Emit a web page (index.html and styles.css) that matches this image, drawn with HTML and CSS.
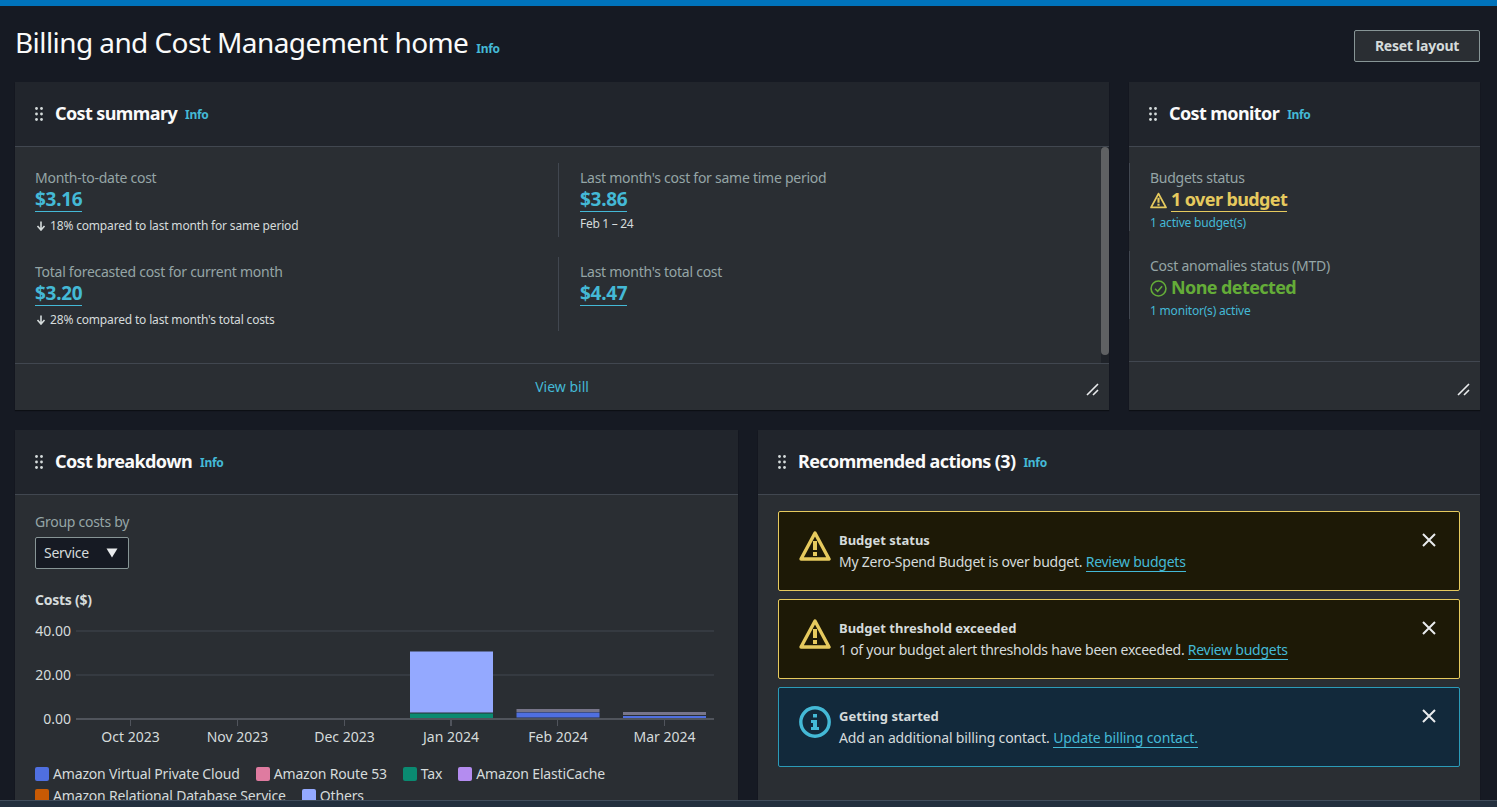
FILE: index.html
```html
<!DOCTYPE html>
<html>

<head>
    <title>Billing and Cost Management home</title>
    <meta charset="UTF-8">
    <link rel="stylesheet" href="styles.css">
</head>

<body>
    <svg width="0" height="0" class="defs">
        <symbol id="grip" viewBox="0 0 8 14">
            <circle cx="1.5" cy="1.5" r="1.4"/><circle cx="6.5" cy="1.5" r="1.4"/>
            <circle cx="1.5" cy="7" r="1.4"/><circle cx="6.5" cy="7" r="1.4"/>
            <circle cx="1.5" cy="12.5" r="1.4"/><circle cx="6.5" cy="12.5" r="1.4"/>
        </symbol>
        <symbol id="resize" viewBox="0 0 14 14">
            <path d="M1 12 L12 1 M7 12 L12 7" fill="none" stroke="currentColor" stroke-width="1.6"/>
        </symbol>
        <symbol id="close" viewBox="0 0 16 16">
            <path d="M2 2 L14 14 M14 2 L2 14" fill="none" stroke="currentColor" stroke-width="2"/>
        </symbol>
        <symbol id="warn" viewBox="0 0 32 32">
            <path d="M16 3 L30 29 H2 Z" fill="none" stroke="currentColor" stroke-width="3.4" stroke-linejoin="round"/>
            <path d="M14 11 H18 V20 H14 Z M14 22 H18 V26 H14 Z" fill="currentColor"/>
        </symbol>
        <symbol id="info" viewBox="0 0 32 32">
            <circle cx="16" cy="16" r="14.2" fill="none" stroke="currentColor" stroke-width="3.4"/>
            <path d="M14 8 H18 V11.5 H14 Z M12 14 H18 V21 H20 V24 H12 V21 H14 V17 H12 Z" fill="currentColor"/>
        </symbol>
        <symbol id="down" viewBox="0 0 10 10">
            <path d="M5 0.500 V8 M1.500 5 L5 9 L8.500 5" fill="none" stroke="currentColor" stroke-width="1.600"/>
        </symbol>
    </svg>

    <div class="topbar"></div>

    <main class="page">
        <header class="page-head">
            <div class="page-title">
                <h1>Billing and Cost Management home</h1>
                <a class="info">Info</a>
            </div>
            <button class="btn">Reset layout</button>
        </header>

        <div class="row row-top">
            <section class="card">
                <div class="card-head">
                    <svg class="grip"><use href="#grip"/></svg>
                    <h2>Cost summary</h2>
                    <a class="info">Info</a>
                </div>
                <div class="summary-scroll">
                    <div class="summary-grid">
                        <div class="metric">
                            <div class="label">Month-to-date cost</div>
                            <a class="value">$3.16</a>
                            <div class="note"><svg class="arrow"><use href="#down"/></svg>18% compared to last month for same period</div>
                        </div>
                        <div class="metric divided">
                            <div class="label">Last month's cost for same time period</div>
                            <a class="value">$3.86</a>
                            <div class="note note-range">Feb 1 – 24</div>
                        </div>
                        <div class="metric">
                            <div class="label">Total forecasted cost for current month</div>
                            <a class="value">$3.20</a>
                            <div class="note"><svg class="arrow"><use href="#down"/></svg>28% compared to last month's total costs</div>
                        </div>
                        <div class="metric divided">
                            <div class="label">Last month's total cost</div>
                            <a class="value">$4.47</a>
                        </div>
                    </div>
                    <div class="scrollbar"><div class="thumb"></div></div>
                </div>
                <div class="card-foot">
                    <a class="view-bill">View bill</a>
                    <svg class="resize"><use href="#resize"/></svg>
                </div>
            </section>

            <section class="card">
                <div class="card-head">
                    <svg class="grip"><use href="#grip"/></svg>
                    <h2>Cost monitor</h2>
                    <a class="info">Info</a>
                </div>
                <div class="monitor-body">
                    <div class="metric divided status">
                        <div class="label">Budgets status</div>
                        <div class="status-line warn-text">
                            <svg class="status-icon"><use href="#warn"/></svg>
                            <a class="value status-value">1 over budget</a>
                        </div>
                        <a class="small-link">1 active budget(s)</a>
                    </div>
                    <div class="metric divided status">
                        <div class="label">Cost anomalies status (MTD)</div>
                        <div class="status-line ok-text">
                            <svg class="status-icon" viewBox="0 0 16 16">
                                <circle cx="8" cy="8" r="7" fill="none" stroke="currentColor" stroke-width="1.5"/>
                                <path d="M4.8 8.2 L7.2 10.6 L11.4 5.8" fill="none" stroke="currentColor" stroke-width="1.5"/>
                            </svg>
                            <span class="value status-value">None detected</span>
                        </div>
                        <a class="small-link">1 monitor(s) active</a>
                    </div>
                </div>
                <div class="card-foot foot-monitor">
                    <svg class="resize"><use href="#resize"/></svg>
                </div>
            </section>
        </div>

        <div class="row row-bottom">
            <section class="card">
                <div class="card-head">
                    <svg class="grip"><use href="#grip"/></svg>
                    <h2>Cost breakdown</h2>
                    <a class="info">Info</a>
                </div>
                <div class="breakdown-body">
                    <div class="label-plain">Group costs by</div>
                    <div class="select">
                        <span>Service</span>
                        <svg class="caret" viewBox="0 0 12 10"><path d="M0.5 0.5 H11.5 L6 9.5 Z" fill="currentColor"/></svg>
                    </div>
                    <div class="chart-title">Costs ($)</div>
                    <svg class="chart" width="688" height="134" viewBox="35 620 688 134">
                        <g class="grid-lines">
                            <path d="M76 631 H714 M76 675 H714"/>
                        </g>
                        <g class="bars">
                            <rect x="410" y="651.5" width="83" height="61" fill="#94a9ff"/>
                            <rect x="410" y="713.5" width="83" height="5" fill="#0a8a71"/>
                            <rect x="516.500" y="709" width="83" height="3" fill="#77758a"/>
                            <rect x="516.500" y="712.500" width="83" height="5" fill="#4f6fe0"/>
                            <rect x="623" y="712" width="83" height="3" fill="#77758a"/>
                            <rect x="623" y="716" width="83" height="2" fill="#4f6fe0"/>
                        </g>
                        <path class="axis" d="M76 719 H714 M130.500 719 V726 M237.500 719 V726 M344.500 719 V726 M451 719 V726 M557.500 719 V726 M664.500 719 V726"/>
                        <g class="tick-y">
                            <text x="71" y="636">40.00</text>
                            <text x="71" y="680">20.00</text>
                            <text x="71" y="724">0.00</text>
                        </g>
                        <g class="tick-x">
                            <text x="130.500" y="742">Oct 2023</text>
                            <text x="237.500" y="742">Nov 2023</text>
                            <text x="344.500" y="742">Dec 2023</text>
                            <text x="451" y="742">Jan 2024</text>
                            <text x="558" y="742">Feb 2024</text>
                            <text x="664.500" y="742">Mar 2024</text>
                        </g>
                    </svg>
                    <ul class="legend">
                        <li><i class="swatch c-vpc"></i>Amazon Virtual Private Cloud</li>
                        <li><i class="swatch c-route"></i>Amazon Route 53</li>
                        <li><i class="swatch c-tax"></i>Tax</li>
                        <li><i class="swatch c-cache"></i>Amazon ElastiCache</li>
                        <li><i class="swatch c-rds"></i>Amazon Relational Database Service</li>
                        <li><i class="swatch c-others"></i>Others</li>
                    </ul>
                </div>
            </section>

            <section class="card">
                <div class="card-head">
                    <svg class="grip"><use href="#grip"/></svg>
                    <h2>Recommended actions (3)</h2>
                    <a class="info">Info</a>
                </div>
                <div class="actions-body">
                    <div class="alert alert-warn">
                        <svg class="alert-icon"><use href="#warn"/></svg>
                        <div class="alert-text">
                            <strong>Budget status</strong>
                            <p>My Zero-Spend Budget is over budget. <a class="inline-link">Review budgets</a></p>
                        </div>
                        <svg class="alert-close"><use href="#close"/></svg>
                    </div>
                    <div class="alert alert-warn">
                        <svg class="alert-icon"><use href="#warn"/></svg>
                        <div class="alert-text">
                            <strong>Budget threshold exceeded</strong>
                            <p>1 of your budget alert thresholds have been exceeded. <a class="inline-link">Review budgets</a></p>
                        </div>
                        <svg class="alert-close"><use href="#close"/></svg>
                    </div>
                    <div class="alert alert-info">
                        <svg class="alert-icon"><use href="#info"/></svg>
                        <div class="alert-text">
                            <strong>Getting started</strong>
                            <p>Add an additional billing contact. <a class="inline-link">Update billing contact.</a></p>
                        </div>
                        <svg class="alert-close"><use href="#close"/></svg>
                    </div>
                </div>
            </section>
        </div>
    </main>

    <div class="bottombar"></div>
</body>

</html>
```

FILE: styles.css
```css
html, body {
    margin: 0;
    height: 807px;
    overflow: hidden;
}

body {
    background: #161a23;
    color: #d5dbdb;
    font-family: "Noto Sans", sans-serif;
    font-size: 14px;
    line-height: 20px;
}

a {
    color: #44b9d6;
}

.defs {
    position: absolute;
}

.topbar {
    height: 6px;
    background: #0073bb;
}

.bottombar {
    position: fixed;
    left: 0;
    right: 0;
    bottom: 0;
    height: 6px;
    background: #232f3e;
    border-top: 1px solid #414d5c;
}

.page {
    padding: 0 17px 0 15px;
}

.page-head {
    height: 76px;
    display: flex;
    justify-content: space-between;
    align-items: flex-start;
}

.page-title {
    display: flex;
    align-items: baseline;
    gap: 8px;
    padding-top: 18px;
}

h1 {
    margin: 0;
    font-size: 28px;
    line-height: 36px;
    font-weight: 400;
    color: #fafafa;
    letter-spacing: -0.58px;
}

.info {
    font-size: 12px;
    font-weight: 700;
    line-height: 16px;
    letter-spacing: -0.3px;
}

.btn {
    margin-top: 24px;
    width: 126px;
    height: 32px;
    border: 1px solid #879596;
    border-radius: 2px;
    background: #2a2e33;
    color: #d5dbdb;
    font: 700 14px/20px "Noto Sans", sans-serif;
    letter-spacing: -0.25px;
    padding: 0;
}

.row {
    display: grid;
    column-gap: 20px;
}

.row-top {
    grid-template-columns: 1094px 351px;
    height: 328px;
    margin-bottom: 20px;
}

.row-bottom {
    grid-template-columns: 723px 722px;
}

.card {
    background: #2a2e33;
    display: flex;
    flex-direction: column;
    box-shadow: 0 1px 1px #0c0f14;
}

.card-head {
    height: 65px;
    flex: none;
    box-sizing: border-box;
    display: flex;
    align-items: center;
    padding: 0 20px;
    background: #21252c;
    border-bottom: 1px solid #414750;
}

.grip {
    width: 8px;
    height: 14px;
    margin-right: 12px;
    fill: #d5dbdb;
}

h2 {
    margin: -3px 8px 0 0;
    font-size: 18px;
    line-height: 24px;
    font-weight: 700;
    color: #fafafa;
    letter-spacing: -0.6px;
}

.card-head .info {
    padding-top: 2px;
}

.summary-scroll {
    flex: 1;
    display: flex;
    min-height: 0;
}

.summary-grid {
    flex: 1;
    display: grid;
    grid-template-columns: 523px 523px;
    grid-auto-rows: 74px;
    row-gap: 20px;
    padding: 16px 20px 0;
}

.metric {
    padding-top: 5px;
    box-sizing: border-box;
}

.divided {
    border-left: 1px solid #414750;
    padding-left: 21px;
}

.label, .label-plain {
    color: #95a5a6;
    letter-spacing: -0.26px;
}

.value {
    display: inline-block;
    font-size: 19px;
    line-height: 23px;
    font-weight: 700;
    letter-spacing: -0.3px;
    border-bottom: 1px solid currentColor;
}

.note {
    font-size: 12px;
    line-height: 16px;
    margin-top: 6px;
    color: #d5dbdb;
    letter-spacing: -0.17px;
}

.note-range {
    margin-top: 4px;
    letter-spacing: -0.3px;
}

.arrow {
    width: 10px;
    height: 10px;
    margin: 0 4px 0 1px;
    vertical-align: -1px;
}

.scrollbar {
    width: 8px;
    background: #1f2329;
}

.thumb {
    height: 208px;
    background: #5f6163;
    border-radius: 4px;
}

.card-foot {
    height: 46px;
    flex: none;
    border-top: 1px solid #414750;
    display: flex;
    align-items: center;
    justify-content: center;
    position: relative;
}

.foot-monitor {
    height: 48px;
}

.resize {
    position: absolute;
    right: 9px;
    bottom: 13px;
    width: 14px;
    height: 14px;
    color: #e9ebed;
}

.monitor-body {
    flex: 1;
    padding-top: 16px;
}

.status {
    height: 68px;
    margin-bottom: 20px;
    padding-left: 20px;
}

.status-line {
    display: flex;
    align-items: center;
    gap: 4px;
}

.status-icon {
    width: 17px;
    height: 17px;
}

.status-value {
    font-size: 18px;
    letter-spacing: -0.6px;
}

.warn-text, .warn-text .value {
    color: #e6ca5e;
}

.ok-text {
    color: #64ac38;
}

.ok-text .value {
    border-bottom-color: transparent;
}

.small-link {
    display: block;
    font-size: 12px;
    line-height: 16px;
    margin-top: 3px;
    letter-spacing: -0.2px;
}

.breakdown-body {
    padding: 17px 20px 0;
}

.select {
    box-sizing: border-box;
    width: 94px;
    height: 32px;
    margin-top: 5px;
    padding: 0 10px 0 8px;
    display: flex;
    align-items: center;
    justify-content: space-between;
    background: #161a23;
    border: 1px solid #879596;
    border-radius: 2px;
    color: #d5dbdb;
    letter-spacing: -0.25px;
}

.caret {
    width: 12px;
    height: 10px;
    color: #e9ebed;
}

.chart-title {
    margin-top: 21px;
    font-weight: 700;
    letter-spacing: -0.25px;
}

.chart {
    display: block;
    margin-top: 10px;
}

.grid-lines path {
    stroke: #3a3f47;
    stroke-width: 1.500;
    fill: none;
}

.axis {
    stroke: #50545c;
    stroke-width: 1.500;
    fill: none;
    shape-rendering: crispEdges;
}

.tick-y text, .tick-x text {
    fill: #d5dbdb;
    font-size: 14px;
}

.tick-y text {
    text-anchor: end;
}

.tick-x text {
    text-anchor: middle;
}

.legend {
    list-style: none;
    margin: 10px 0 0;
    padding: 0;
    display: flex;
    flex-wrap: wrap;
    gap: 2px 16px;
    letter-spacing: -0.17px;
}

.legend li {
    display: flex;
    align-items: center;
    gap: 4px;
}

.swatch {
    width: 14px;
    height: 14px;
    border-radius: 2px;
}

.c-vpc { background: #4f6fe0; }
.c-route { background: #df7ba0; }
.c-tax { background: #0a8a71; }
.c-cache { background: #b48cf0; }
.c-rds { background: #c85a04; }
.c-others { background: #94a9ff; }

.actions-body {
    padding: 16px 20px;
    display: flex;
    flex-direction: column;
    gap: 8px;
}

.alert {
    box-sizing: border-box;
    height: 80px;
    padding: 18px 22px 0 20px;
    display: flex;
    align-items: flex-start;
    border: 1px solid;
    border-radius: 2px;
    color: #d5dbdb;
}

.alert-warn {
    background: #1d1906;
    border-color: #e6ca5e;
}

.alert-info {
    background: #12293b;
    border-color: #2b9bb8;
}

.alert-icon {
    width: 32px;
    height: 32px;
    margin-right: 8px;
    flex: none;
}

.alert-warn .alert-icon {
    color: #e6ca5e;
}

.alert-info .alert-icon {
    color: #44b9d6;
}

.alert-text {
    flex: 1;
    margin-top: -1px;
}

.alert-text strong {
    display: block;
    font-size: 13px;
    line-height: 22px;
}

.alert-text p {
    margin: 0;
    line-height: 22px;
    letter-spacing: -0.25px;
}

.alert-info p {
    letter-spacing: -0.15px;
}

.inline-link {
    border-bottom: 1px solid currentColor;
}

.alert-close {
    width: 16px;
    height: 16px;
    margin-top: 2px;
    color: #e9ebed;
}
```
